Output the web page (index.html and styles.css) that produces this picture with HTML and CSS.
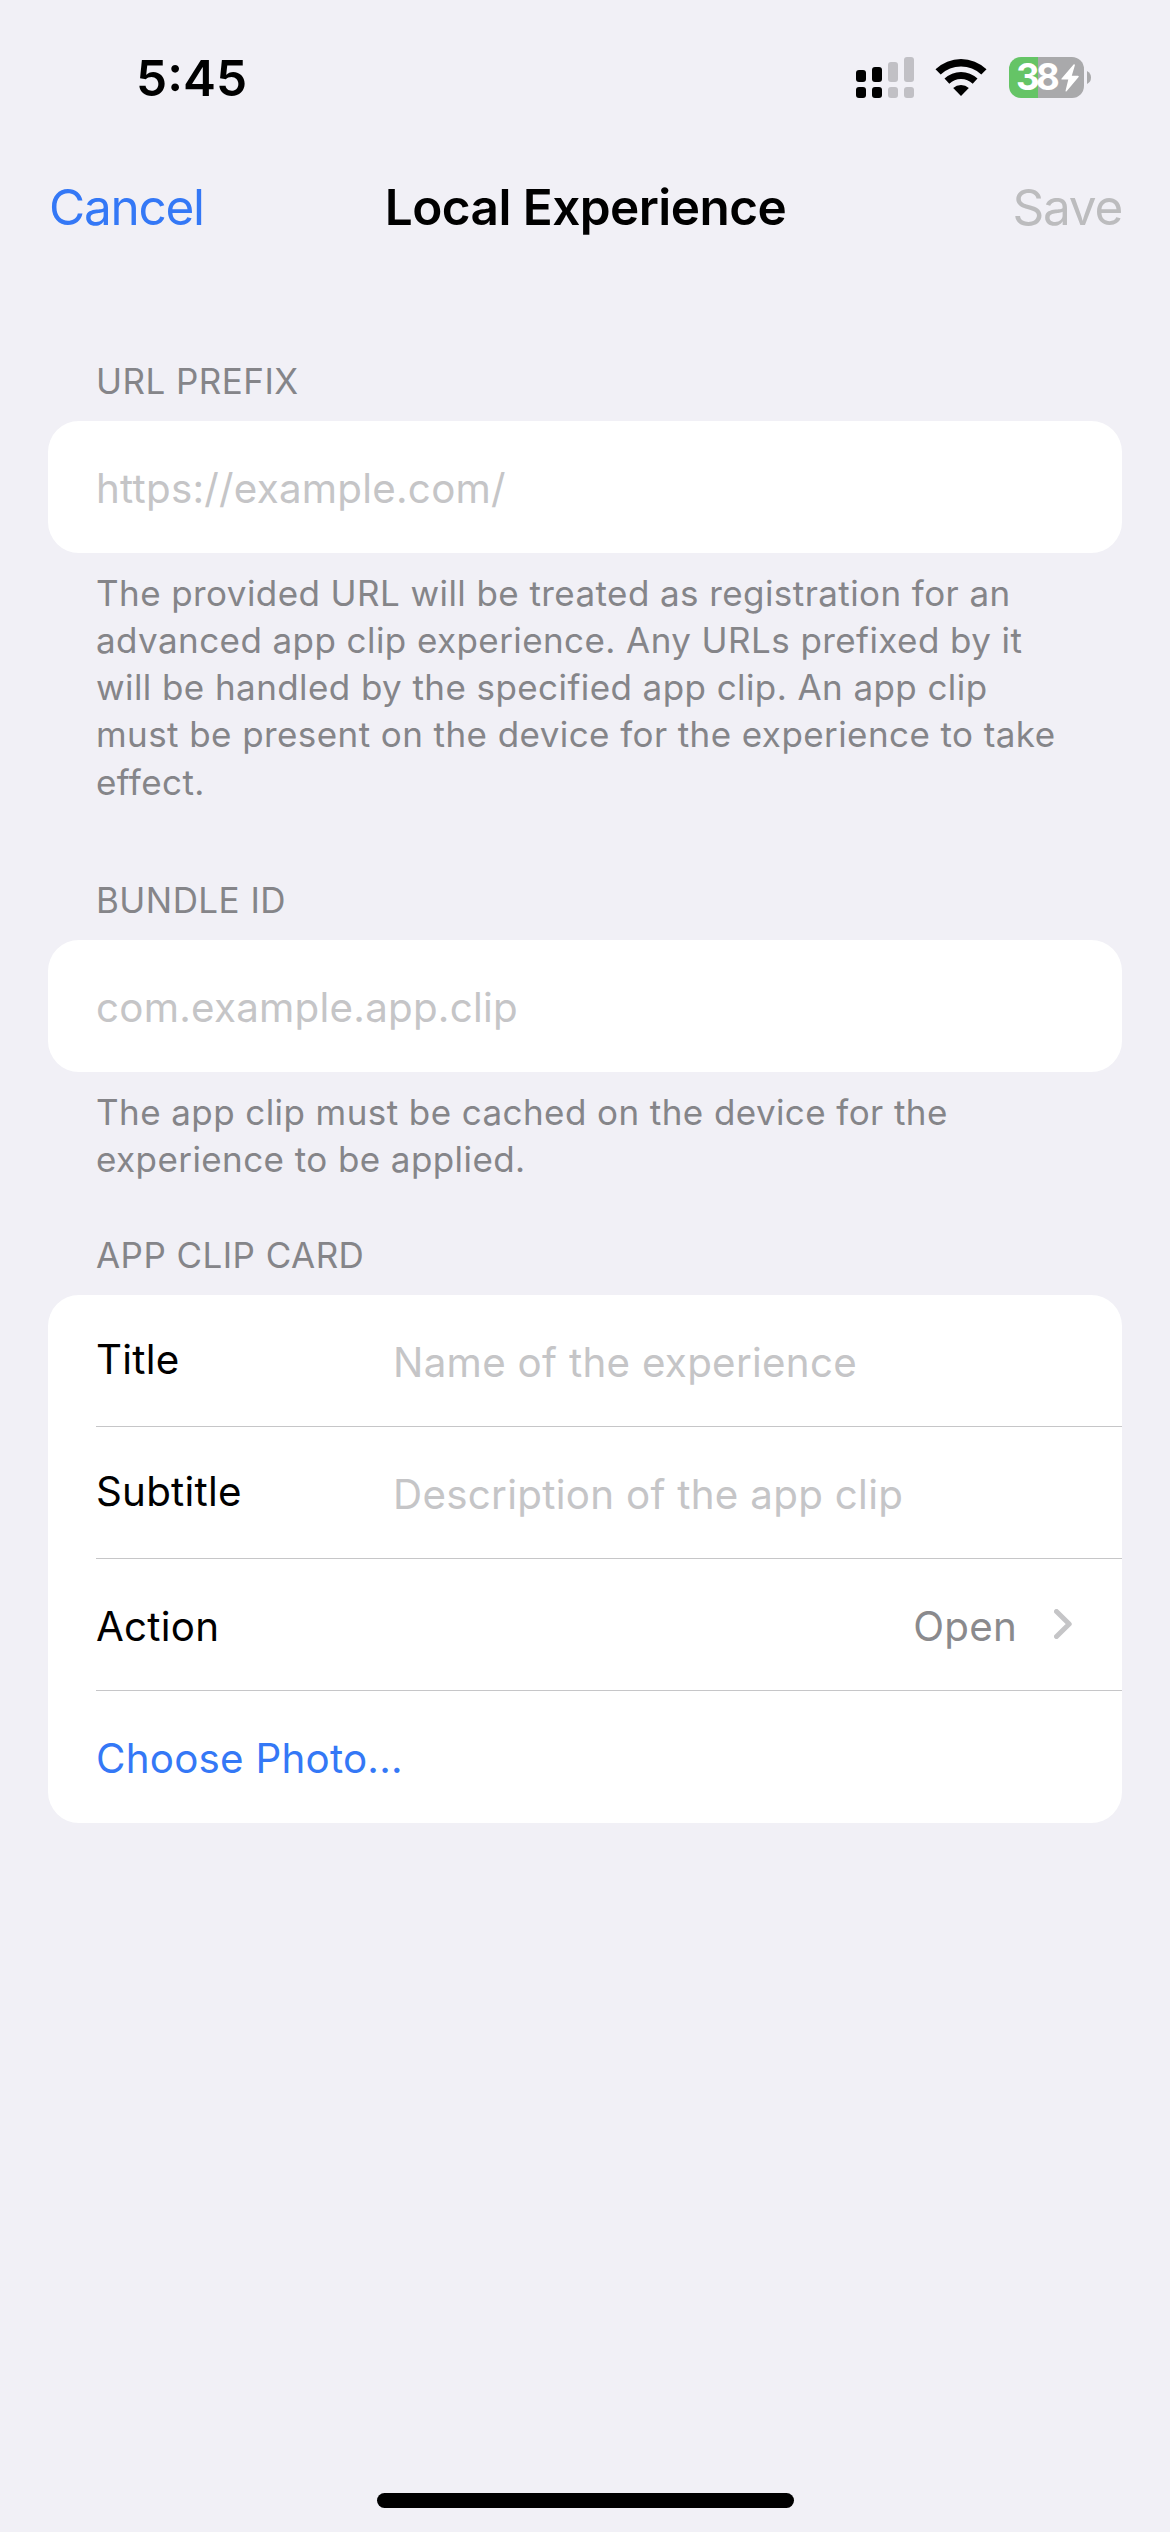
FILE: index.html
```html
<!DOCTYPE html>
<html lang="en">
<head>
<meta charset="utf-8">
<title>Local Experience</title>
<link rel="stylesheet" href="styles.css">
</head>
<body>
<div class="screen">
  <header class="status-bar">
    <span class="time">5:45</span>
    <div class="status-icons">
      <svg class="signal" width="58" height="41" viewBox="0 0 58 41">
        <rect x="0" y="13" width="10" height="12" rx="3"/>
        <rect x="16" y="10" width="10" height="15" rx="3"/>
        <rect class="dim" x="32" y="5" width="10" height="20" rx="3"/>
        <rect class="dim" x="48" y="0" width="10" height="25" rx="3"/>
        <rect x="0" y="30" width="10" height="11" rx="3"/>
        <rect x="16" y="30" width="10" height="11" rx="3"/>
        <rect class="dim" x="32" y="30" width="10" height="11" rx="3"/>
        <rect class="dim" x="48" y="30" width="10" height="11" rx="3"/>
      </svg>
      <svg class="wifi" width="52" height="41" viewBox="-26 -39 52 41">
        <path d="M-25.5-26.8A37 37 0 0 1 25.5-26.8L20.3-21.4A29.5 29.5 0 0 0-20.3-21.4Z"/>
        <path d="M-16.5-17.4A24 24 0 0 1 16.5-17.4L11.7-12.3A17 17 0 0 0-11.7-12.3Z"/>
        <path d="M0 0L-7.8-8A11.5 11.5 0 0 1 7.8-8Z"/>
      </svg>
      <div class="battery">
        <div class="battery-body">
          <span class="battery-level">38</span>
          <svg class="bolt" width="18" height="28" viewBox="0 0 18 28"><path d="M12.8.3L.6 14.6Q0 15.6 1.2 15.6H7.3L4.6 26.5Q4.4 28 5.6 27.2L17.6 12.9Q18.2 11.8 17 11.8H10.8L13.9 1.2Q14 0 12.8.3Z"/></svg>
        </div>
        <svg class="battery-nub" width="4" height="13" viewBox="0 0 4 13"><path d="M0 0Q4 2 4 6.5T0 13Z"/></svg>
      </div>
    </div>
  </header>

  <nav class="nav-bar">
    <a class="nav-cancel">Cancel</a>
    <h1 class="nav-title">Local Experience</h1>
    <a class="nav-save">Save</a>
  </nav>

  <main class="form">
    <section class="section">
      <h2 class="section-header">URL PREFIX</h2>
      <div class="card">
        <div class="row row-single"><span class="placeholder">https://example.com/</span></div>
      </div>
      <p class="section-footer">The provided URL will be treated as registration for an<br>advanced app clip experience. Any URLs prefixed by it<br>will be handled by the specified app clip. An app clip<br>must be present on the device for the experience to take<br>effect.</p>
    </section>

    <section class="section section-bundle">
      <h2 class="section-header">BUNDLE ID</h2>
      <div class="card">
        <div class="row row-single"><span class="placeholder">com.example.app.clip</span></div>
      </div>
      <p class="section-footer">The app clip must be cached on the device for the<br>experience to be applied.</p>
    </section>

    <section class="section section-card">
      <h2 class="section-header">APP CLIP CARD</h2>
      <div class="card">
        <div class="row field"><span class="label">Title</span><span class="placeholder">Name of the experience</span></div>
        <div class="row field"><span class="label">Subtitle</span><span class="placeholder">Description of the app clip</span></div>
        <div class="row action">
          <span>Action</span>
          <span class="value">Open</span>
          <svg class="chevron" width="18" height="30" viewBox="0 0 18 30"><path d="M2.5 2.5L15.2 15L2.5 27.5"/></svg>
        </div>
        <div class="row choose"><a>Choose Photo...</a></div>
      </div>
    </section>
  </main>

  <div class="home-indicator"></div>
</div>
</body>
</html>
```

FILE: styles.css
```css
body {
  margin: 0;
  background: #f1f0f6;
  color: #000;
  font-family: Inter, "Liberation Sans", sans-serif;
}

.screen {
  display: flex;
  flex-direction: column;
  width: 1170px;
  height: 2532px;
  overflow: hidden;
}

/* Status bar */
.status-bar {
  display: flex;
  justify-content: space-between;
  align-items: flex-start;
  height: 156px;
  padding: 0 79px 0 136px;
  box-sizing: border-box;
}

.time {
  margin-top: 48px;
  font-size: 49.5px;
  font-weight: 600;
  line-height: 60px;
}

.status-icons {
  display: flex;
  margin-top: 57px;
}

.signal .dim { fill: #c1c0c5; }

.wifi { margin: 0 22px 0 21px; }

.battery {
  display: flex;
  align-items: center;
  gap: 3px;
}

.battery-body {
  display: flex;
  align-items: center;
  gap: 4px;
  width: 75px;
  height: 41px;
  padding-left: 7px;
  box-sizing: border-box;
  border-radius: 12px;
  background: linear-gradient(to right, #65c466 29px, #a9a9ab 29px);
  color: #fff;
}

.battery-level {
  width: 41px;
  font-size: 36.5px;
  font-weight: 700;
  line-height: 41px;
  letter-spacing: -3.6px;
}

.bolt { fill: #fff; }

.battery-nub { fill: #a9a9ab; }

/* Navigation bar */
.nav-bar {
  display: grid;
  grid-template-columns: 1fr auto 1fr;
  height: 202px;
  padding: 21px 48px 0 49px;
  box-sizing: border-box;
  font-size: 49.5px;
  line-height: 60px;
  letter-spacing: -1.27px;
}

.nav-cancel { color: #3478f6; }

.nav-title {
  margin: 0;
  font-size: 49.5px;
  font-weight: 600;
  letter-spacing: -0.56px;
}

.nav-save {
  justify-self: end;
  color: #bcbcbe;
}

/* Form */
.form {
  flex: 1;
  padding: 0 48px;
}

.section-header {
  margin: 0;
  padding: 0 0 16px 48px;
  color: #858589;
  font-size: 35px;
  font-weight: 400;
  line-height: 47px;
  letter-spacing: 0.45px;
}

.section-footer {
  margin: 16.5px 0 0 48px;
  color: #858589;
  font-size: 35px;
  line-height: 47.25px;
  letter-spacing: 0.42px;
  white-space: nowrap;
}

.section-bundle { margin-top: 71.25px; }

.section-card { margin-top: 49px; }

.card {
  border-radius: 31px;
  background: #fff;
  font-size: 40.3px;
  letter-spacing: 0.25px;
}

.row {
  display: flex;
  align-items: center;
  height: 132px;
  margin-left: 48px;
  box-sizing: border-box;
}

.row:not(:last-child) { border-bottom: 1px solid #c6c6c8; }

.row-single { padding-top: 3px; }

.placeholder { color: #c5c5c7; }

.field { padding-bottom: 3px; }

.field .label { width: 297px; }

.field .placeholder {
  padding-top: 6px;
  letter-spacing: 0.3px;
}

.action { padding: 3px 50px 0 0; }

.value {
  margin-left: auto;
  color: #8a8a8d;
}

.chevron {
  margin: -5px 0 0 37px;
  fill: none;
  stroke: #c5c5c7;
  stroke-width: 5;
  stroke-linecap: round;
  stroke-linejoin: round;
}

.choose {
  padding-top: 3px;
  color: #3478f6;
}

.home-indicator {
  align-self: center;
  width: 417px;
  height: 15px;
  margin-bottom: 24px;
  border-radius: 8px;
  background: #000;
}
```
